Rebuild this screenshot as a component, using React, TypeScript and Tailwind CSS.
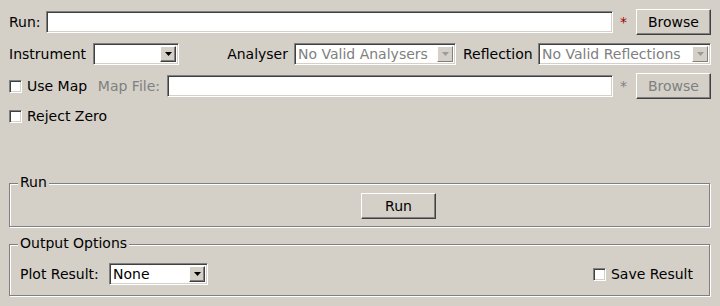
import type { ReactNode } from 'react';

const sunken =
  'border border-t-[#808080] border-l-[#808080] border-b-white border-r-white shadow-[inset_1px_1px_0_#404040,inset_-1px_-1px_0_#d4d0c8]';
const raised =
  'border border-t-white border-l-white border-b-[#404040] border-r-[#404040] shadow-[inset_-1px_-1px_0_#808080]';
const etched =
  'border border-[#808080] shadow-[inset_1px_1px_0_#ffffff,1px_1px_0_#ffffff]';

function TextInput({ className = '' }: { className?: string }) {
  return <div className={`h-[22px] bg-white ${sunken} ${className}`} />;
}

function Button({
  label,
  disabled,
  className = '',
}: {
  label: string;
  disabled?: boolean;
  className?: string;
}) {
  return (
    <button
      type="button"
      className={`flex h-[26px] w-[75px] items-center justify-center bg-[#d4d0c8] ${raised} ${
        disabled ? 'text-[#808080]' : 'text-black'
      } ${className}`}
    >
      {label}
    </button>
  );
}

function Combo({
  value = '',
  disabled,
  width,
}: {
  value?: string;
  disabled?: boolean;
  width: string;
}) {
  return (
    <div className={`flex h-[22px] items-stretch bg-white p-[2px] ${sunken} ${width}`}>
      <span
        className={`min-w-0 flex-1 truncate pl-[1px] leading-[17px] ${
          disabled ? 'text-[#808080]' : 'text-black'
        }`}
      >
        {value}
      </span>
      <span
        className={`flex w-[16px] items-center justify-center bg-[#d4d0c8] ${
          disabled
            ? 'border border-t-white border-l-white border-b-[#808080] border-r-[#808080]'
            : raised
        }`}
      >
        <svg width="7" height="4" viewBox="0 0 7 4">
          <path d="M0 0h7L3.5 4z" fill={disabled ? '#9a9a9a' : '#000'} />
        </svg>
      </span>
    </div>
  );
}

function Check({ label }: { label: string }) {
  return (
    <span className="flex items-center">
      <span className={`h-[13px] w-[13px] bg-white ${sunken}`} />
      <span className="ml-[5px]">{label}</span>
    </span>
  );
}

function Group({
  title,
  className = '',
  children,
}: {
  title: string;
  className?: string;
  children: ReactNode;
}) {
  return (
    <div className={`relative mr-[1px] ${etched} ${className}`}>
      <span className="absolute left-[8px] top-[-10px] bg-[#d4d0c8] px-[2px] leading-[17px]">
        {title}
      </span>
      {children}
    </div>
  );
}

export default function App() {
  return (
    <div
      className="h-[306px] w-[720px] overflow-hidden bg-[#d4d0c8] px-[9px] text-[14px] text-black"
      style={{ fontFamily: '"DejaVu Sans", sans-serif' }}
    >
      <div className="mt-[9px] flex h-[26px] items-center">
        <span className="w-[37px]">Run:</span>
        <TextInput className="w-[567px]" />
        <span className="w-[23px] pl-[7px] text-[#a00000]">*</span>
        <Button label="Browse" />
      </div>

      <div className="mt-[6px] flex h-[26px] items-center">
        <span className="w-[84px]">Instrument</span>
        <Combo width="w-[86px]" />
        <span className="w-[115px] pr-[6px] text-right">Analyser</span>
        <Combo width="w-[162px]" value="No Valid Analysers" disabled />
        <span className="w-[82px] pl-[7px]">Reflection</span>
        <Combo width="w-[173px]" value="No Valid Reflections" disabled />
      </div>

      <div className="mt-[6px] flex h-[26px] items-center">
        <div className="flex w-[158px] items-center">
          <Check label="Use Map" />
          <span className="flex-1 pr-[7px] text-right text-[#808080]">Map File:</span>
        </div>
        <TextInput className="w-[446px]" />
        <span className="w-[23px] pl-[7px] text-[#808080]">*</span>
        <Button label="Browse" disabled />
      </div>

      <div className="mt-[4px] flex h-[26px] items-center">
        <Check label="Reject Zero" />
      </div>

      <Group title="Run" className="mt-[54px] h-[44px]">
        <div className="flex pl-[351px] pt-[9px]">
          <Button label="Run" />
        </div>
      </Group>

      <Group title="Output Options" className="mt-[17px] h-[52px]">
        <div className="flex items-center pl-[10px] pr-[16px] pt-[18px]">
          <span className="w-[89px]">Plot Result:</span>
          <Combo width="w-[99px]" value="None" />
          <span className="flex-1" />
          <Check label="Save Result" />
        </div>
      </Group>
    </div>
  );
}
